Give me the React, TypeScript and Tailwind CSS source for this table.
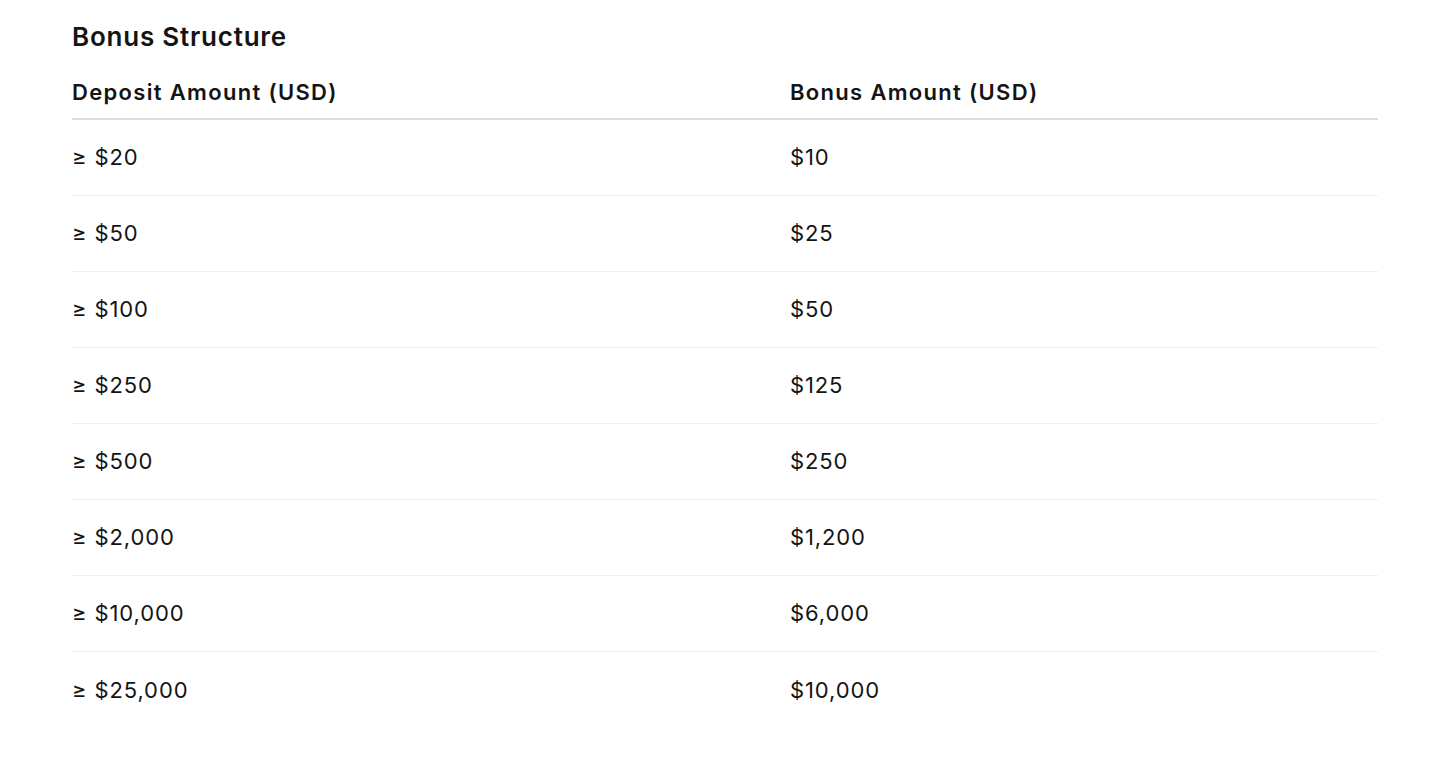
const rows = [
  ["≥ $20", "$10"],
  ["≥ $50", "$25"],
  ["≥ $100", "$50"],
  ["≥ $250", "$125"],
  ["≥ $500", "$250"],
  ["≥ $2,000", "$1,200"],
  ["≥ $10,000", "$6,000"],
  ["≥ $25,000", "$10,000"],
];

const App = () => {
  return (
    <main className="min-h-screen bg-white px-[72px] pt-[21px] text-[#141414] font-['Inter',sans-serif]">
      <h2 className="text-[26px] leading-8 font-semibold tracking-[0.03em] mb-[25px]">Bonus Structure</h2>

      {/* TABLE */}
      <div className="w-[1306px]">
        <div className="grid grid-cols-[718px_1fr] pb-[12px] border-b-2 border-[#dedede] text-[22px] leading-7 font-semibold tracking-[0.06em]">
          <div>Deposit Amount (USD)</div>
          <div>Bonus Amount (USD)</div>
        </div>
        {rows.map(([deposit, bonus], i) => (
          <div
            key={deposit}
            className={
              i < rows.length - 1
                ? "grid grid-cols-[718px_1fr] items-center h-[76px] border-b border-[#f0f0f0] text-[22px] tracking-[0.04em]"
                : "grid grid-cols-[718px_1fr] items-center h-[76px] text-[22px] tracking-[0.04em]"
            }
          >
            <div>{deposit}</div>
            <div>{bonus}</div>
          </div>
        ))}
      </div>
    </main>
  );
};

export default App;
